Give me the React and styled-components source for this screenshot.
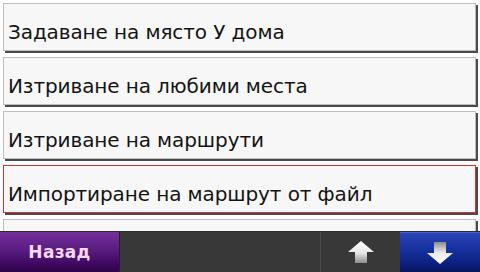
import React from "react";
import styled, { createGlobalStyle } from "styled-components";

const Global = createGlobalStyle`
  html, body {
    margin: 0;
    padding: 0;
    background: #ffffff;
  }
  * {
    box-sizing: border-box;
  }
`;

const Screen = styled.div`
  width: 480px;
  height: 272px;
  display: flex;
  flex-direction: column;
  background: #ffffff;
  font-family: "DejaVu Sans", Verdana, sans-serif;
  overflow: hidden;
`;

const List = styled.div`
  flex: 1;
  overflow: hidden;
  padding: 3px 4px 0 3px;
  display: flex;
  flex-direction: column;
  gap: 6px;
`;

const Row = styled.div`
  flex: none;
  height: 48px;
  display: flex;
  align-items: flex-end;
  padding: 0 0 7px 4px;
  background: #f7f7f7;
  border: 1px solid ${(props) => (props.selected ? "#cc3333" : "#bdbdbd")};
  box-shadow: 2px 2px 0 #4a4a4a;
  color: #141414;
  font-size: 20px;
  letter-spacing: -0.1px;
  line-height: 22px;
  white-space: nowrap;
`;

const Bar = styled.div`
  flex: none;
  height: 41px;
  display: flex;
  background: #383838;
  border-top: 1px solid #2a2a2a;
`;

const BackButton = styled.div`
  width: 120px;
  display: flex;
  align-items: center;
  justify-content: center;
  background: linear-gradient(#74309a 0%, #5a1c80 45%, #3e0860 80%, #2e0448 100%);
  border-right: 1px solid #2a1a30;
  color: #f4d8f4;
  font-weight: bold;
  font-size: 17px;
  letter-spacing: 0.3px;
`;

const Spacer = styled.div`
  flex: 1;
  border-right: 1px solid #4a4a4a;
`;

const ArrowButton = styled.div`
  width: ${(props) => props.w}px;
  display: flex;
  align-items: center;
  justify-content: center;
  background: ${(props) =>
    props.active
      ? "linear-gradient(#2a44b8 0%, #16309c 45%, #0a1e78 85%, #08165c 100%)"
      : "transparent"};
  border-top: ${(props) => (props.active ? "1px solid #4a62d0" : "none")};
`;

const Arrow = ({ down, id }) => (
  <svg width="26" height="22" viewBox="0 0 26 22">
    <defs>
      <linearGradient id={id} x1="0" y1="0" x2="0" y2="1">
        <stop offset="0" stopColor="#ffffff" />
        <stop offset="0.55" stopColor="#e6e6e6" />
        <stop offset="1" stopColor="#8c8c8c" />
      </linearGradient>
    </defs>
    <polygon
      transform={down ? "rotate(180 13 11)" : undefined}
      points="13,0 26,11 19,11 19,22 7,22 7,11 0,11"
      fill={`url(#${id})`}
    />
  </svg>
);

const items = [
  "Задаване на място У дома",
  "Изтриване на любими места",
  "Изтриване на маршрути",
  "Импортиране на маршрут от файл",
  "",
];

export default function App() {
  return (
    <>
      <Global />
      <Screen>
        <List>
          {items.map((text, i) => (
            <Row key={i} selected={i === 3}>
              {text}
            </Row>
          ))}
        </List>
        <Bar>
          <BackButton>Назад</BackButton>
          <Spacer />
          <ArrowButton w={79}>
            <Arrow id="up" />
          </ArrowButton>
          <ArrowButton w={80} active>
            <Arrow id="down" down />
          </ArrowButton>
        </Bar>
      </Screen>
    </>
  );
}
